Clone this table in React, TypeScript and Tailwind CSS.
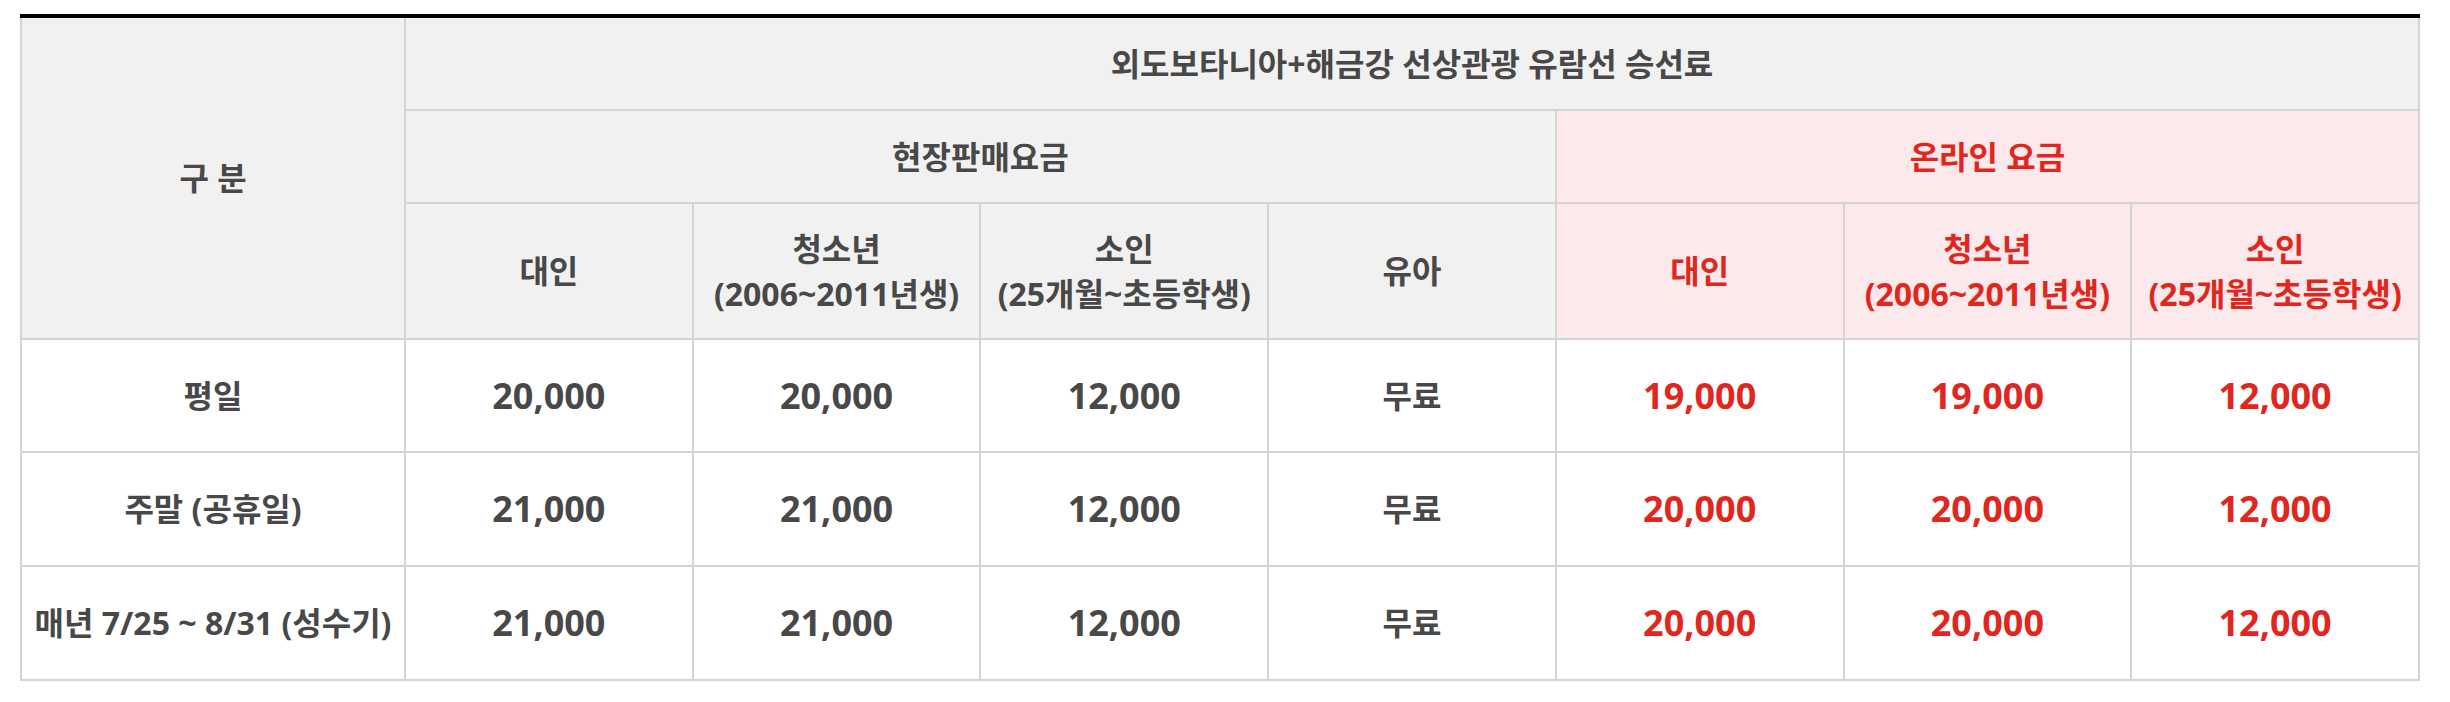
import React from "react";

const B = "border-r-2 border-b-2 border-[#d4d4d4]";
const F = "font-['Noto_Sans','Noto_Sans_CJK_KR',sans-serif] font-bold";

type Row = { label: string; vals: string[] };

const rows: Row[] = [
  { label: "평일", vals: ["20,000", "20,000", "12,000", "무료", "19,000", "19,000", "12,000"] },
  { label: "주말 (공휴일)", vals: ["21,000", "21,000", "12,000", "무료", "20,000", "20,000", "12,000"] },
  { label: "매년 7/25 ~ 8/31 (성수기)", vals: ["21,000", "21,000", "12,000", "무료", "20,000", "20,000", "12,000"] },
];

export default function App() {
  return (
    <div className={`bg-white w-[2450px] h-[702px] pt-[14px] pl-[20px] ${F}`}>
      <div className="w-[2400px] border-t-4 border-black">
        <table className="w-[2400px] table-fixed border-separate border-spacing-0 border-l-2 border-[#d4d4d4] text-center text-[#484848]">
          <colgroup>
            <col className="w-[384px]" />
            <col />
            <col />
            <col />
            <col />
            <col />
            <col />
            <col />
          </colgroup>
          <thead>
            <tr>
              <th rowSpan={3} className={`${B} bg-[#f1f1f1] text-[32px] font-bold`}>
                구 분
              </th>
              <th colSpan={7} className={`${B} h-[93px] bg-[#f1f1f1] text-[32px] font-bold`}>
                외도보타니아+해금강 선상관광 유람선 승선료
              </th>
            </tr>
            <tr>
              <th colSpan={4} className={`${B} h-[93px] bg-[#f1f1f1] text-[32px] font-bold`}>
                현장판매요금
              </th>
              <th colSpan={3} className={`${B} h-[93px] bg-[#fce9eb] text-[32px] font-bold text-[#e0261d]`}>
                온라인 요금
              </th>
            </tr>
            <tr>
              <th className={`${B} h-[136px] bg-[#f1f1f1] text-[32px] font-bold`}>대인</th>
              <th className={`${B} h-[136px] bg-[#f1f1f1] text-[32px] font-bold leading-[45px]`}>
                청소년
                <br />
                (2006~2011년생)
              </th>
              <th className={`${B} h-[136px] bg-[#f1f1f1] text-[32px] font-bold leading-[45px]`}>
                소인
                <br />
                (25개월~초등학생)
              </th>
              <th className={`${B} h-[136px] bg-[#f1f1f1] text-[32px] font-bold`}>유아</th>
              <th className={`${B} h-[136px] bg-[#fce9eb] text-[32px] font-bold text-[#e0261d]`}>대인</th>
              <th className={`${B} h-[136px] bg-[#fce9eb] text-[32px] font-bold leading-[45px] text-[#e0261d]`}>
                청소년
                <br />
                (2006~2011년생)
              </th>
              <th className={`${B} h-[136px] bg-[#fce9eb] text-[32px] font-bold leading-[45px] text-[#e0261d]`}>
                소인
                <br />
                (25개월~초등학생)
              </th>
            </tr>
          </thead>
          <tbody>
            {rows.map((r, i) => (
              <tr key={i}>
                <td className={`${B} ${i === 0 ? "h-[113px]" : "h-[114px]"} text-[32px]`}>{r.label}</td>
                {r.vals.map((v, j) => (
                  <td
                    key={j}
                    className={`${B} ${v === "무료" ? "text-[32px]" : "text-[36px]"} ${j >= 4 ? "text-[#e0261d]" : ""}`}
                  >
                    {v}
                  </td>
                ))}
              </tr>
            ))}
          </tbody>
        </table>
      </div>
    </div>
  );
}
